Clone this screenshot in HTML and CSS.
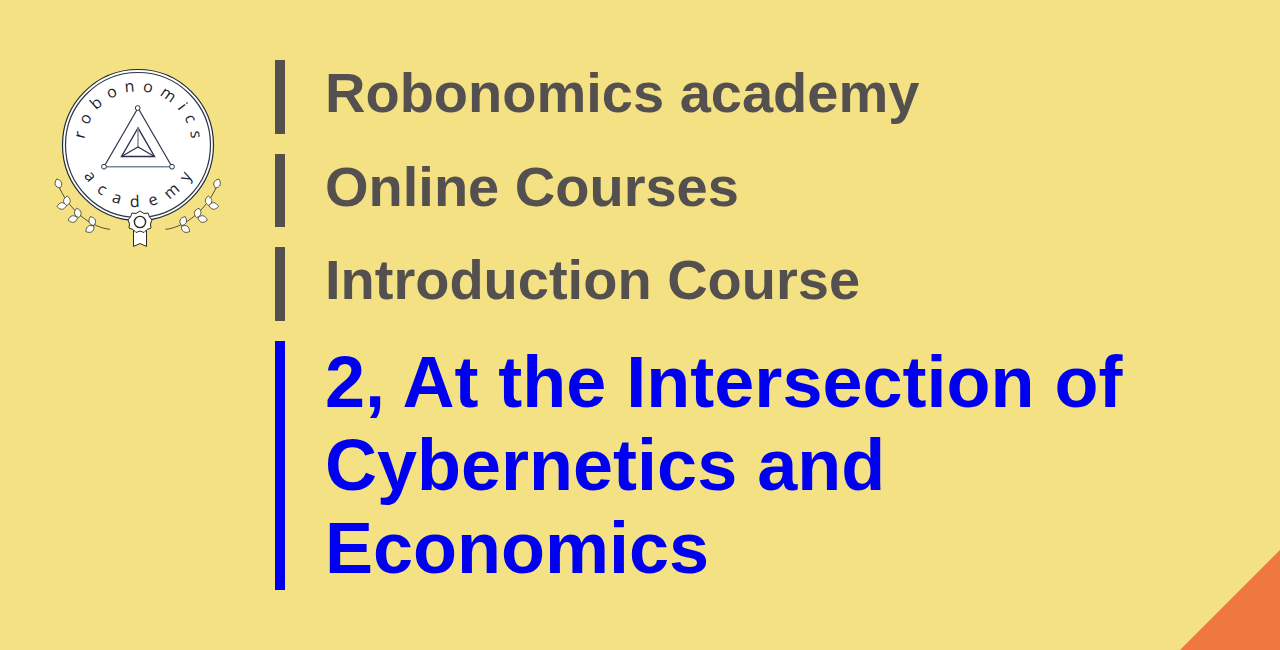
FILE: index.html
```html
<!DOCTYPE html>
<html lang="en">
<head>
  <meta charset="UTF-8">
  <title>Robonomics academy</title>
  <link rel="stylesheet" href="styles.css">
</head>
<body>

  <div class="slide">

    <!-- Academy badge -->
    <svg class="logo" width="170" height="190" viewBox="53 60 170 190">
      <defs>
        <path id="arc-top" d="M138 198.5 A53.5 53.5 0 1 1 138 91.5 A53.5 53.5 0 1 1 138 198.5"/>
        <path id="arc-bottom" d="M138 83 A62 62 0 1 0 138 207 A62 62 0 1 0 138 83"/>
        <g id="leaf">
          <path class="leaf" d="M0 0 C-4.4 -2.6 -4.4 -6.4 0 -9.6 C4.4 -6.4 4.4 -2.6 0 0 Z"/>
        </g>
        <g id="laurel">
          <path class="stem" d="M110 229.3 C95 228 72 215 59 187"/>
          <use href="#leaf" transform="translate(60 188) rotate(-20)"/>
          <use href="#leaf" transform="translate(66.5 205.5) rotate(5)"/>
          <use href="#leaf" transform="translate(66.5 205.5) rotate(-96)"/>
          <use href="#leaf" transform="translate(79 217.5) rotate(-15)"/>
          <use href="#leaf" transform="translate(77.5 218) rotate(-103)"/>
          <use href="#leaf" transform="translate(94 225.5) rotate(-22)"/>
          <use href="#leaf" transform="translate(94 226.5) rotate(-122)"/>
        </g>
      </defs>

      <circle class="ring-outer" cx="138" cy="145" r="75.5"/>
      <circle class="ring-inner" cx="138" cy="145" r="72.5"/>

      <text class="logo-text logo-text-top"><textPath href="#arc-top" startOffset="51%" text-anchor="middle">robonomics</textPath></text>
      <text class="logo-text logo-text-bottom"><textPath href="#arc-bottom" startOffset="51.4%" text-anchor="middle">academy</textPath></text>

      <!-- triangle mark -->
      <path class="tri" d="M138 108 L104 166.7"/>
      <path class="tri" d="M138 108 L172 166.7"/>
      <path class="tri-base" d="M104 166.7 H172"/>
      <path class="tri-in" d="M138 128 L121.5 156.5 H154.5 Z"/>
      <path class="tri-spoke" d="M138 128 V147"/>
      <path class="tri-in-thin" d="M121.5 156.5 L138 147 L154.5 156.5"/>
      <circle class="node" cx="137.7" cy="108" r="2.4"/>
      <circle class="node" cx="104" cy="166.7" r="2.4"/>
      <circle class="node" cx="172" cy="166.7" r="2.4"/>

      <use href="#laurel"/>
      <use href="#laurel" transform="translate(275.5 0) scale(-1 1)"/>

      <!-- medal and ribbon -->
      <path class="ribbon" d="M133.5 230 V246.5 L140 243.5 L146.5 246.5 V230 Z"/>
      <path class="medal" d="M140 211 L144 213.5 L148 213 L149.5 217 L152 220 L150.5 224 L151 228 L147 229.5 L144 232.5 L140 231 L136 232.5 L133 229.5 L129 228 L129.5 224 L128 220 L130.5 217 L132 213 L136 213.5 Z"/>
      <circle class="medal-in" cx="140" cy="222" r="5.6"/>
    </svg>

    <!-- Course headings -->
    <div class="titles">
      <div class="title">Robonomics academy</div>
      <div class="title">Online Courses</div>
      <div class="title">Introduction Course</div>
      <div class="title title-main">2, At the Intersection of Cybernetics and Economics</div>
    </div>

  </div>

  <div class="corner"></div>

</body>
</html>
```

FILE: styles.css
```css
/* Global Styles */
body {
  font-family: "Liberation Sans", Arial, sans-serif;
  margin: 0;
  padding: 0;
  background-color: #f4e183;
  height: 650px;
  overflow: hidden;
  position: relative;
}

.slide {
  display: flex;
  align-items: flex-start;
  padding: 60px 0 0 53px;
}

/* Badge */
.logo {
  flex: none;
  display: block;
  margin-right: 52px;
}

.ring-outer {
  fill: #fff;
  stroke: #1f2a3a;
  stroke-width: 1.2;
}

.ring-inner {
  fill: none;
  stroke: #2b3648;
  stroke-width: 1.2;
}

.logo-text {
  font-family: "Open Sans", sans-serif;
  font-size: 16px;
  fill: #1a2433;
}

.logo-text-top {
  letter-spacing: 7.4px;
}

.logo-text-bottom {
  letter-spacing: 10.6px;
}

.tri,
.tri-in,
.tri-in-thin,
.tri-spoke,
.tri-base {
  fill: none;
  stroke: #26344a;
  stroke-width: 1.2;
}

.tri-base {
  stroke: #7c8794;
  stroke-width: 1.5;
}

.tri-in {
  stroke-width: 1.4;
}

.tri-spoke {
  stroke: #7c8794;
  stroke-width: 1.4;
}

.node {
  fill: #fff;
  stroke: #26344a;
  stroke-width: 1;
}

.stem {
  fill: none;
  stroke: #2c2a20;
  stroke-width: 0.8;
}

.leaf {
  fill: #fff;
  stroke: #2c2a20;
  stroke-width: 0.7;
}

.ribbon,
.medal,
.medal-in {
  fill: #fff;
  stroke: #2c2a20;
  stroke-width: 1;
}

.medal-in {
  stroke-width: 1.4;
}

/* Headings */
.titles {
  flex: 1;
  display: flex;
  flex-direction: column;
  gap: 20px;
}

.title {
  border-left: 10px solid #555050;
  padding-left: 40px;
  color: #555050;
  font-size: 56px;
  font-weight: bold;
  line-height: 65px;
  height: 73.5px;
}

.title-main {
  border-left-color: #0000f0;
  color: #0000f0;
  font-size: 72px;
  line-height: 83px;
  height: 249px;
  width: 820px;
}

/* Orange corner */
.corner {
  position: absolute;
  right: 0;
  bottom: 0;
  width: 100px;
  height: 100px;
  background-color: #ef7840;
  clip-path: polygon(100% 0, 100% 100%, 0 100%);
}
```
